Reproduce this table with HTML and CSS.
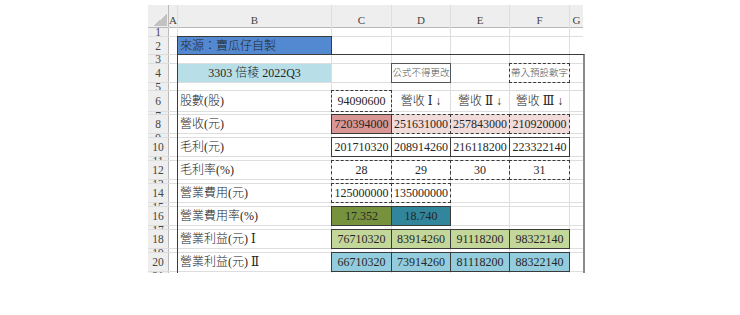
FILE: index.html
```html
<!DOCTYPE html>
<html lang="zh-Hant">
<head>
  <meta charset="UTF-8">
  <meta name="viewport" content="width=device-width, initial-scale=1.0">
  <title>3303 倍稜 2022Q3</title>
  <link rel="stylesheet" href="styles.css">
</head>
<body>
  <div class="sheet">
    <div class="grid">
      <!-- column headings -->
      <div class="corner"></div>
      <div class="ch">A</div><div class="ch">B</div><div class="ch">C</div><div class="ch">D</div>
      <div class="ch">E</div><div class="ch">F</div><div class="ch">G</div>

      <!-- 1 -->
      <div class="rh thin"><span>1</span></div>
      <div></div><div></div><div></div><div></div><div></div><div></div><div></div>
      <!-- 2 -->
      <div class="rh"><span>2</span></div>
      <div></div><div class="lbl title solid">來源：賣瓜仔自製</div>
      <div></div><div></div><div></div><div></div><div></div>
      <!-- 3 -->
      <div class="rh thin"><span>3</span></div>
      <div></div><div></div><div></div><div></div><div></div><div></div><div></div>
      <!-- 4 -->
      <div class="rh"><span>4</span></div>
      <div></div><div class="aqua">3303 倍稜 2022Q3</div>
      <div></div><div class="note solid">公式不得更改</div><div></div>
      <div class="note dash">帶入預設數字</div><div></div>
      <!-- 5 -->
      <div class="rh thin"><span>5</span></div>
      <div></div><div></div><div></div><div></div><div></div><div></div><div></div>
      <!-- 6 -->
      <div class="rh"><span>6</span></div>
      <div></div><div class="lbl">股數(股)</div>
      <div class="dash">94090600</div>
      <div>營收 Ⅰ ↓</div><div>營收 Ⅱ ↓</div><div>營收 Ⅲ ↓</div><div></div>
      <!-- 7 -->
      <div class="rh thin"><span>7</span></div>
      <div></div><div></div><div></div><div></div><div></div><div></div><div></div>
      <!-- 8 -->
      <div class="rh"><span>8</span></div>
      <div></div><div class="lbl">營收(元)</div>
      <div class="rose solid">720394000</div>
      <div class="blush dash">251631000</div><div class="blush dash">257843000</div><div class="blush dash">210920000</div>
      <div></div>
      <!-- 9 -->
      <div class="rh thin"><span>9</span></div>
      <div></div><div></div><div></div><div></div><div></div><div></div><div></div>
      <!-- 10 -->
      <div class="rh"><span>10</span></div>
      <div></div><div class="lbl">毛利(元)</div>
      <div class="solid">201710320</div><div class="solid">208914260</div>
      <div class="solid">216118200</div><div class="solid">223322140</div><div></div>
      <!-- 11 -->
      <div class="rh thin"><span>11</span></div>
      <div></div><div></div><div></div><div></div><div></div><div></div><div></div>
      <!-- 12 -->
      <div class="rh"><span>12</span></div>
      <div></div><div class="lbl">毛利率(%)</div>
      <div class="dash">28</div><div class="dash">29</div><div class="dash">30</div><div class="dash">31</div>
      <div></div>
      <!-- 13 -->
      <div class="rh thin"><span>13</span></div>
      <div></div><div></div><div></div><div></div><div></div><div></div><div></div>
      <!-- 14 -->
      <div class="rh"><span>14</span></div>
      <div></div><div class="lbl">營業費用(元)</div>
      <div class="dash">125000000</div><div class="dash">135000000</div>
      <div></div><div></div><div></div>
      <!-- 15 -->
      <div class="rh thin"><span>15</span></div>
      <div></div><div></div><div></div><div></div><div></div><div></div><div></div>
      <!-- 16 -->
      <div class="rh"><span>16</span></div>
      <div></div><div class="lbl">營業費用率(%)</div>
      <div class="olive solid">17.352</div><div class="teal solid">18.740</div>
      <div></div><div></div><div></div>
      <!-- 17 -->
      <div class="rh thin"><span>17</span></div>
      <div></div><div></div><div></div><div></div><div></div><div></div><div></div>
      <!-- 18 -->
      <div class="rh"><span>18</span></div>
      <div></div><div class="lbl">營業利益(元) Ⅰ</div>
      <div class="lime solid">76710320</div><div class="lime solid">83914260</div>
      <div class="lime solid">91118200</div><div class="lime solid">98322140</div><div></div>
      <!-- 19 -->
      <div class="rh thin"><span>19</span></div>
      <div></div><div></div><div></div><div></div><div></div><div></div><div></div>
      <!-- 20 -->
      <div class="rh"><span>20</span></div>
      <div></div><div class="lbl">營業利益(元) Ⅱ</div>
      <div class="sky solid">66710320</div><div class="sky solid">73914260</div>
      <div class="sky solid">81118200</div><div class="sky solid">88322140</div><div></div>
      <!-- 21 -->
      <div class="rh thin"><span>21</span></div>
      <div></div><div></div><div></div><div></div><div></div><div></div><div></div>
    </div>
  </div>
</body>
</html>
```

FILE: styles.css
```css
body { margin: 0; background: #fff; color: #262626; font-family: "Liberation Serif", "DejaVu Serif", "Noto Sans CJK TC", serif; }

/* visible part of the worksheet, the frame marks the input block B3:G */
.sheet { position: relative; width: 437px; height: 268px; margin: 5px 0 0 148px; overflow: hidden; }
.sheet::after { content: ""; position: absolute; left: 29px; top: 49px; width: 408px; height: 240px; box-sizing: border-box; border: 1px solid #3c3c3c; border-right: 2px solid #8a8a8a; pointer-events: none; }

/* the 1px gaps are the gridlines */
.grid {
  display: grid;
  width: 435px;
  gap: 1px;
  background: #dedede;
  font-weight: 300;
  grid-template-columns: 20px 8px 153px 59px 58px 58px 59px 13px;
  grid-template-rows: 22px 8px 17px 8px 18px 7px 20px 2px 18px 3px 18px 3px 18px 3px 18px 3px 18px 3px 18px 3px 18px 1px;
}
.grid > div { display: flex; align-items: center; justify-content: center; overflow: hidden; white-space: nowrap; background: #fff; font-size: 12px; line-height: 14px; }

/* headings */
.grid > .corner { background: linear-gradient(to bottom right, transparent 50%, #c2c2c2 50%) no-repeat right 1px bottom 1px / 14px 12px, #eeeeee; box-shadow: 0 1px 0 #b9b9b9, 1px 0 0 #b9b9b9; }
.grid > .ch { align-items: flex-end; background: #eeeeee; color: #444; font-size: 11px; box-shadow: 0 1px 0 #b9b9b9; }
.grid > .rh { background: #eeeeee; color: #444; font-size: 11.5px; line-height: 12px; box-shadow: 1px 0 0 #b9b9b9; }
.grid > .rh.thin { align-items: flex-start; }
.rh.thin span { margin-top: -2px; }

/* cell contents */
.grid > .lbl { justify-content: flex-start; padding-left: 2px; }
.grid > .note { font-size: 9.5px; color: #555; }

.solid { outline: 1px solid #3a3a3a; }
.dash { outline: 1px dashed #3a3a3a; }
.grid > .note.solid { outline-color: #555; }

.grid > .title { background: #5389d0; }
.grid > .aqua { background: #b8dfe8; }
.grid > .rose { background: #d99694; }
.grid > .blush { background: #f2dcdb; }
.grid > .olive { background: #76923c; }
.grid > .teal { background: #31869b; }
.grid > .lime { background: #c4d79b; }
.grid > .sky { background: #93cddd; }
```
